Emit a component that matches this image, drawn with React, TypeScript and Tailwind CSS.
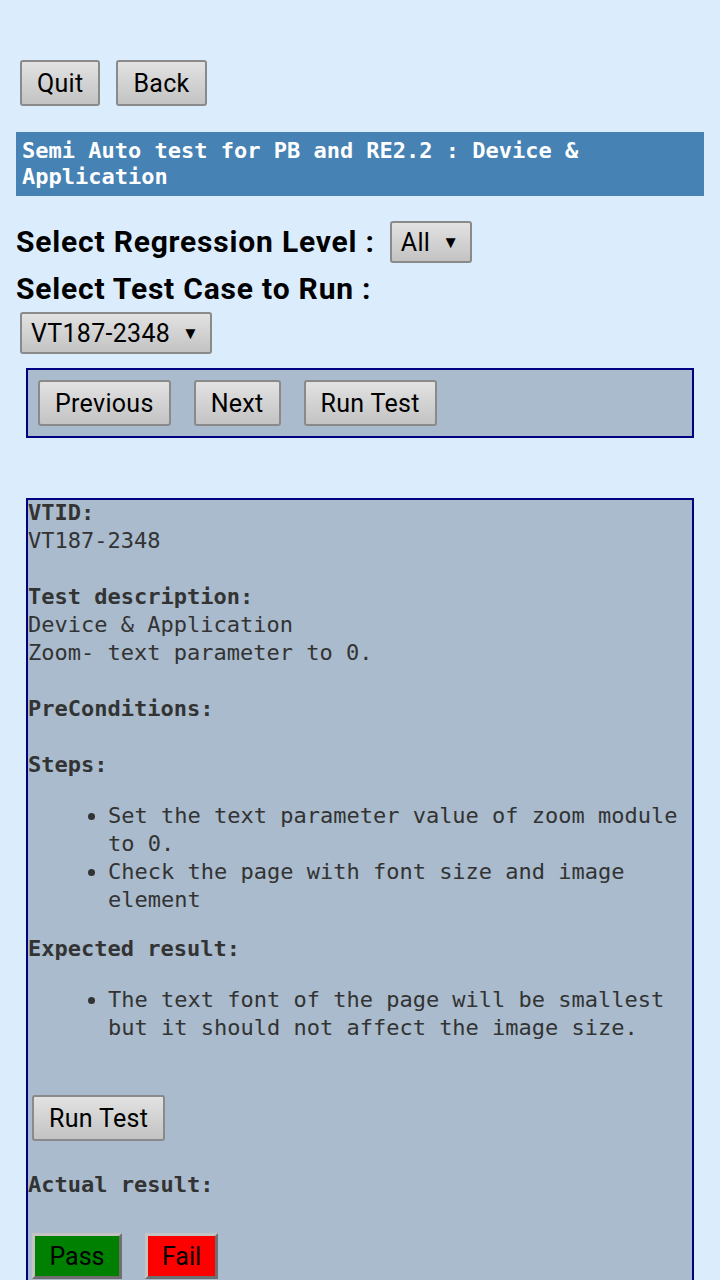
import React from 'react'

const mono = "font-['DejaVu_Sans_Mono',monospace]"
const sans = "font-['Roboto',sans-serif]"

// grey gradient push button, the way the old webview drew it
function Btn({ children, className = '' }: { children: React.ReactNode; className?: string }) {
  return (
    <button
      className={`${sans} inline-flex h-[46px] items-center justify-center rounded-[3px] border-2 border-[#8a8a8a] bg-gradient-to-b from-[#e2e2e2] to-[#c3c3c3] px-[15px] text-[25px] font-normal leading-none tracking-[0.3px] text-black ${className}`}
    >
      {children}
    </button>
  )
}

function Select({ value, className = '' }: { value: string; className?: string }) {
  return (
    <div
      className={`${sans} inline-flex h-[42px] items-center gap-[12px] rounded-[3px] border-2 border-[#8a8a8a] bg-gradient-to-b from-[#e2e2e2] to-[#c3c3c3] pl-[9px] pr-[11px] text-[25px] font-normal leading-none tracking-[0.3px] text-black ${className}`}
    >
      <span>{value}</span>
      <span className="text-[17px]">▼</span>
    </div>
  )
}

function Label({ children }: { children: React.ReactNode }) {
  return <div className="font-bold">{children}</div>
}

export default function App() {
  return (
    <div className="min-h-[1280px] w-[720px] bg-[#dbedfd] px-[16px] pt-[60px]">
      {/* top actions */}
      <div className="flex gap-[16px] pl-[4px]">
        <Btn>Quit</Btn>
        <Btn>Back</Btn>
      </div>

      {/* page title */}
      <div
        className={`${mono} mt-[26px] bg-[#4682b4] px-[6px] py-[6px] text-[22px] font-bold leading-[26px] text-white`}
      >
        Semi Auto test for PB and RE2.2 : Device &amp; Application
      </div>

      {/* selectors */}
      <div
        className={`${sans} mt-[25px] flex items-center text-[30px] font-bold leading-[34px] tracking-[0.8px] text-black`}
      >
        <span>Select Regression Level :</span>
        <Select value="All" className="ml-[15px]" />
      </div>
      <div className={`${sans} mt-[9px] text-[30px] font-bold leading-[34px] tracking-[0.8px] text-black`}>
        Select Test Case to Run :
      </div>
      <Select value="VT187-2348" className="ml-[4px] mt-[6px]" />

      {/* navigation */}
      <div className="mx-[10px] mt-[14px] flex gap-[23px] border-2 border-[#000080] bg-[#a9bbcc] p-[10px]">
        <Btn>Previous</Btn>
        <Btn>Next</Btn>
        <Btn>Run Test</Btn>
      </div>

      {/* test case details */}
      <div
        className={`${mono} mx-[10px] mt-[60px] h-[784px] border-2 border-b-0 border-[#000080] bg-[#a9bbcc] text-[22px] leading-[28px] text-[#333333]`}
      >
        <div className="-mt-[1px]">
          <Label>VTID:</Label>
          <div>VT187-2348</div>
          <div className="h-[28px]" />
          <Label>Test description:</Label>
          <div>Device &amp; Application</div>
          <div>Zoom- text parameter to 0.</div>
          <div className="h-[28px]" />
          <Label>PreConditions:</Label>
          <div className="h-[28px]" />
          <Label>Steps:</Label>
          <ul className="mb-[21px] mt-[23px] list-disc pl-[80px]">
            <li>Set the text parameter value of zoom module to 0.</li>
            <li>Check the page with font size and image element</li>
          </ul>
          <Label>Expected result:</Label>
          <ul className="mb-[21px] mt-[23px] list-disc pl-[80px]">
            <li>The text font of the page will be smallest but it should not affect the image size.</li>
          </ul>
          <div className="h-[32px]" />
          <Btn className="ml-[4px]">Run Test</Btn>
          <div className="mt-[30px] font-bold">Actual result:</div>
          <div className="mt-[34px] flex gap-[23px] pl-[4px]">
            <button
              className={`${sans} h-[46px] w-[90px] border-[3px] border-b-[#6e6e6e] border-l-[#c4c4c4] border-r-[#6e6e6e] border-t-[#c4c4c4] bg-[#008000] text-[25px] leading-none text-black`}
            >
              Pass
            </button>
            <button
              className={`${sans} h-[46px] w-[73px] border-[3px] border-b-[#6e6e6e] border-l-[#c4c4c4] border-r-[#6e6e6e] border-t-[#c4c4c4] bg-[#ff0000] text-[25px] leading-none text-black`}
            >
              Fail
            </button>
          </div>
        </div>
      </div>
    </div>
  )
}
